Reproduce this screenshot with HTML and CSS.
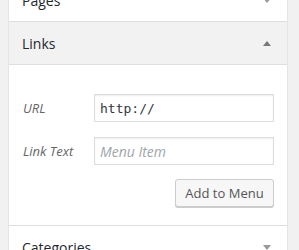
FILE: index.html
```html
<!DOCTYPE html>
<html>
<head>
  <meta charset="UTF-8">
  <title>Menu items</title>
  <link rel="stylesheet" href="styles.css">
</head>
<body>
  <div class="accordion">
    <div class="section">
      <h3 class="section-title">Pages <span class="arrow down"></span></h3>
    </div>

    <div class="section open">
      <h3 class="section-title">Links <span class="arrow up"></span></h3>
      <div class="section-content">
        <div class="field">
          <label for="url">URL</label>
          <input type="text" id="url" class="code" value="http://">
        </div>
        <div class="field">
          <label for="linkText">Link Text</label>
          <input type="text" id="linkText" placeholder="Menu Item">
        </div>
        <div class="actions">
          <button class="button">Add to Menu</button>
        </div>
      </div>
    </div>

    <div class="section">
      <h3 class="section-title">Categories <span class="arrow down"></span></h3>
    </div>
  </div>
</body>
</html>
```

FILE: styles.css
```css
* {
  margin: 0;
  padding: 0;
  box-sizing: border-box;
}

body {
  background: #f1f1f1;
  font-family: "Open Sans", "Liberation Sans", sans-serif;
  color: #23282d;
  padding-left: 8px;
  overflow: hidden;
}

.accordion {
  width: 280px;
  margin-top: -21px;
  background: #fff;
  border-left: 1px solid #e5e5e5;
  border-right: 1px solid #e5e5e5;
}

.section {
  border-bottom: 1px solid #dfdfdf;
}

.section-title {
  display: flex;
  align-items: center;
  justify-content: space-between;
  height: 42px;
  padding: 0 15px 0 13px;
  font-size: 14px;
  font-weight: 400;
  line-height: 21px;
  background: #fff;
}

.open .section-title {
  background: #f2f2f2;
  border-bottom: 1px solid #dfdfdf;
  height: 43px;
}

.arrow {
  width: 0;
  height: 0;
  border-left: 4px solid transparent;
  border-right: 4px solid transparent;
  margin-right: 1px;
}

.arrow.up {
  border-bottom: 5px solid #777;
}

.arrow.down {
  border-top: 5px solid #999;
}

.section-content {
  padding: 29px 14px 18px 14px;
}

.field {
  display: grid;
  grid-template-columns: 71px 180px;
  align-items: center;
  margin-bottom: 15px;
}

.field label {
  font-size: 13px;
  font-style: italic;
  color: #666;
}

.field input {
  height: 28px;
  padding: 0 5px;
  border: 1px solid #ddd;
  box-shadow: inset 0 1px 2px rgba(0, 0, 0, 0.07);
  font-family: "Open Sans", "Liberation Sans", sans-serif;
  font-size: 14px;
  color: #32373c;
  outline: none;
}

.field input.code {
  font-family: "DejaVu Sans Mono", "Liberation Mono", monospace;
  font-size: 13px;
}

.field input::placeholder {
  color: #a0a5aa;
  font-style: italic;
}

.actions {
  display: flex;
  justify-content: flex-end;
  margin-top: -1px;
  margin-right: -1px;
}

.button {
  width: 99px;
  height: 28px;
  background: #f7f7f7;
  border: 1px solid #ccc;
  border-radius: 3px;
  box-shadow: 0 1px 0 #ccc;
  font-family: "Open Sans", "Liberation Sans", sans-serif;
  font-size: 13px;
  color: #555;
  cursor: pointer;
}
```
